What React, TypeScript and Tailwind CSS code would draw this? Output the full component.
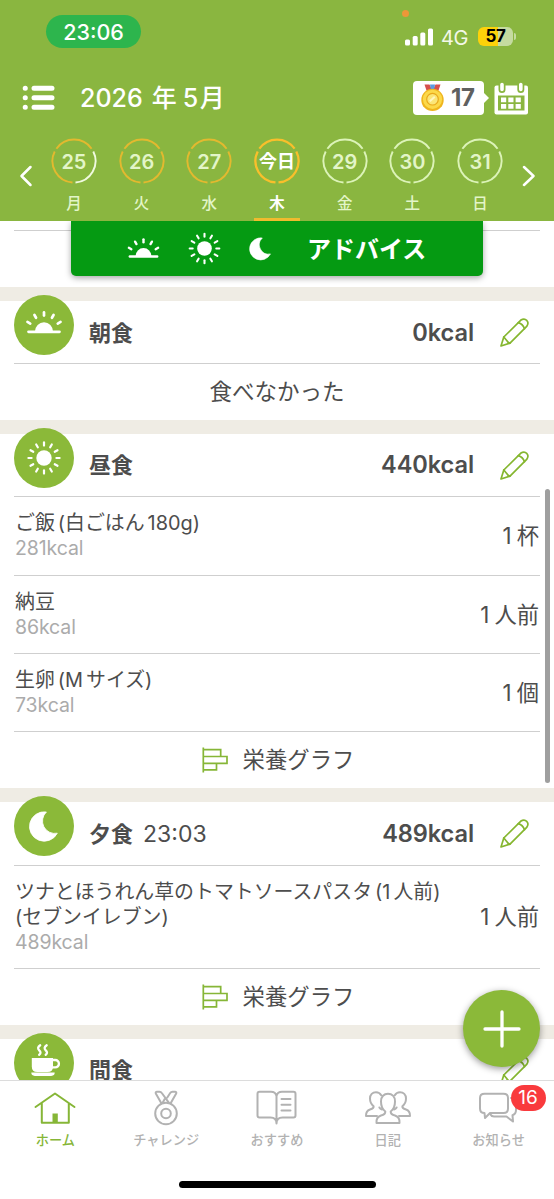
import type { ReactNode } from "react";

type Day = {
  label: string;
  weekday: string;
  arcs: [string, string, string];
  today?: boolean;
};

type Food = {
  name: ReactNode;
  kcal: string;
  amount: string;
};

const GOLD = "#e3b92f";
const PALE = "#dcf3b8";

const days: Day[] = [
  { label: "25", weekday: "月", arcs: [GOLD, "#f0fadf", GOLD] },
  { label: "26", weekday: "火", arcs: [GOLD, GOLD, GOLD] },
  { label: "27", weekday: "水", arcs: [GOLD, GOLD, GOLD] },
  { label: "今日", weekday: "木", arcs: ["#f9bf2b", "#f9bf2b", "#f9bf2b"], today: true },
  { label: "29", weekday: "金", arcs: [PALE, PALE, PALE] },
  { label: "30", weekday: "土", arcs: [PALE, PALE, PALE] },
  { label: "31", weekday: "日", arcs: [PALE, PALE, PALE] },
];

const lunch: Food[] = [
  {
    name: (
      <>
        ご飯<span className="ml-[3px]">(白ごはん</span>
        <span className="ml-[3px]">180g)</span>
      </>
    ),
    kcal: "281kcal",
    amount: "杯",
  },
  { name: "納豆", kcal: "86kcal", amount: "人前" },
  {
    name: (
      <>
        生卵<span className="ml-[3px]">(M</span>
        <span className="ml-[3px]">サイズ)</span>
      </>
    ),
    kcal: "73kcal",
    amount: "個",
  },
];

const dinner: Food[] = [
  {
    name: (
      <>
        ツナとほうれん草のトマトソースパスタ<span className="ml-[3px]">(1</span>
        <span className="ml-[3px]">人前)</span>
        <br />
        (セブンイレブン)
      </>
    ),
    kcal: "489kcal",
    amount: "人前",
  },
];

function Sunrise({ className }: { className?: string }) {
  return (
    <svg viewBox="0 0 60 60" className={className} stroke="#fff" strokeWidth="2.7" strokeLinecap="round">
      <path d="M14.5 36.8H45.5" />
      <path d="M21 36.5a9 9.3 0 0 1 18 0z" fill="#fff" stroke="none" />
      {[-60, -30, 0, 30, 60].map((a) => (
        <path key={a} d="M30 20.6V17.4" transform={`rotate(${a} 30 36.5)`} />
      ))}
    </svg>
  );
}

function Sun({ className }: { className?: string }) {
  return (
    <svg viewBox="0 0 60 60" className={className} stroke="#fff" strokeWidth="2.2" strokeLinecap="round">
      <circle cx="30" cy="30" r="7.7" fill="#fff" stroke="none" />
      {[...Array(12)].map((_, i) => (
        <path key={i} d="M30 17.6V14.4" transform={`rotate(${i * 30} 30 30)`} />
      ))}
    </svg>
  );
}

function Moon({ className }: { className?: string }) {
  return (
    <svg viewBox="0 0 60 60" className={className}>
      <path
        d="M32.4 16A14.7 14.7 0 1 0 43.3 37.2A12.4 12.4 0 0 1 32.4 16z"
        fill="#fff"
        stroke="#fff"
        strokeWidth="0.8"
        strokeLinejoin="round"
      />
    </svg>
  );
}

function Cup({ className }: { className?: string }) {
  return (
    <svg viewBox="0 0 60 60" className={className} fill="none" stroke="#fff" strokeLinecap="round">
      <path d="M17.8 25H39v8.500q0 5.500-5.500 5.500H23.300q-5.500 0-5.500-5.500z" fill="#fff" stroke="none" />
      <path d="M39 27h2.200a3.600 3.600 0 0 1 0 7.400H38.500" strokeWidth="2.4" />
      <path d="M17.300 39.600H40.700q0 3.300-3.500 3.300H20.800q-3.500 0-3.500-3.300z" fill="#fff" stroke="none" />
      <path d="M26.200 12.300q-3.600 2.500-1 5t0 4.400M32.700 12.300q-3.600 2.500-1 5t0 4.400" strokeWidth="2.3" />
    </svg>
  );
}

function Pencil() {
  return (
    <svg viewBox="0 0 29 29" className="h-[29px] w-[29px] shrink-0" fill="none" stroke="#85b62f" strokeWidth="1.7" strokeLinejoin="round" strokeLinecap="round">
      <path d="M1 28L3.800 19L20.600 2.300Q24.200 -0.200 26.700 2.300Q29.200 4.900 26.700 8.400L10 25.100Z" />
      <path d="M3.800 19L6.500 22.200Q7.500 24.600 10 25.100M18.300 4.600q4.500 1.300 6.200 6.100" />
    </svg>
  );
}

function GraphIcon() {
  return (
    <svg viewBox="0 0 26 26" className="h-[26px] w-[26px]" fill="none" stroke="#86b637" strokeWidth="1.7">
      <path d="M1.300 0.400V25.400M1.300 2.700H18.700V9.500M1.300 9.500H25V16.300H1.300M14.500 16.300V22.800H1.300" />
    </svg>
  );
}

function Chevron({ left }: { left?: boolean }) {
  return (
    <svg viewBox="0 0 14 22" className="h-[22px] w-3.5" fill="none" stroke="#fff" strokeWidth="2.5" strokeLinecap="round" strokeLinejoin="round">
      <path d={left ? "M11.500 2L2.500 11L11.500 20" : "M3 2L12.500 11L3 20"} />
    </svg>
  );
}

function DayCell({ day }: { day: Day }) {
  return (
    <div className="relative flex w-[67.7px] flex-col items-center">
      <div className="relative flex h-[46px] w-[46px] items-center justify-center">
        <svg viewBox="-23 -23 46 46" className="absolute inset-0" fill="none" strokeWidth={day.today ? 2.3 : 1.9}>
          {/* three arcs: top, right, left */}
          <path d="M-17.600 -12.300A21.500 21.500 0 0 1 17.600 -12.300" stroke={day.arcs[0]} />
          <path d="M19.300 -9.500A21.500 21.500 0 0 1 1.500 21.450" stroke={day.arcs[1]} />
          <path d="M-1.500 21.450A21.500 21.500 0 0 1 -19.300 -9.500" stroke={day.arcs[2]} />
        </svg>
        {day.today ? (
          <span className="mt-0.5 text-[18px] font-bold leading-none text-white">{day.label}</span>
        ) : (
          <span className="mt-0.5 text-[20px] font-semibold leading-none text-[#e3f5c8]">{day.label}</span>
        )}
      </div>
      <span className={day.today ? "mt-[10px] text-[15.5px] font-bold leading-5 text-white" : "mt-[10px] text-[15.5px] font-medium leading-5 text-[#e3f5c8]"}>
        {day.weekday}
      </span>
      {day.today && <div className="absolute top-[80px] h-[3px] w-[46px] bg-[#f0bb2e]" />}
    </div>
  );
}

function Header() {
  return (
    <header className="relative z-20 h-[221px] shrink-0 bg-[#8ab640] text-white">
      <div className="absolute left-[402px] top-[10px] h-[7px] w-[7px] rounded-full bg-[#ed9738]" />
      <div className="flex h-[65px] items-start justify-between pl-[46px] pr-[38px] pt-[15px]">
        <div className="flex h-[33px] w-[95px] items-center justify-center rounded-full bg-[#2db54d] pt-px text-[21.5px] font-medium">
          23:06
        </div>
        <div className="flex h-[43px] items-center">
          <svg viewBox="0 0 28 18" className="h-[18px] w-7" fill="#fff">
            <rect x="0" y="11.5" width="5" height="6" rx="1.5" />
            <rect x="7.7" y="8" width="5" height="9.5" rx="1.5" />
            <rect x="15.3" y="4.5" width="5" height="13" rx="1.5" />
            <rect x="23" y="0.5" width="5" height="17" rx="1.5" />
          </svg>
          <span className="ml-2 mt-[3px] w-[37px] text-[20px] tracking-[-0.4px] text-[#f3f8e8]">4G</span>
          <div className="flex h-[19px] w-[35px] items-center justify-center rounded-md bg-linear-to-r from-[#fdd20a] from-57% to-[#c5dba0] to-57% pt-px text-[17px] font-bold tracking-[-0.5px] text-black">
            57
          </div>
          <div className="ml-px h-[7px] w-0.5 rounded-r-full bg-[#c5dba0]" />
        </div>
      </div>
      <div className="flex h-[66px] items-center pl-[22px] pr-[26px]">
        <svg viewBox="0 0 33 26" className="h-[26px] w-[33px]" stroke="#fff" strokeWidth="5" strokeLinecap="round">
          <path d="M3.200 3.300h0.100M3.200 12.800h0.100M3.200 22.300h0.100M12 3.300h18M12 12.800h18M12 22.300h18" />
        </svg>
        <h1 className="ml-[25px] flex text-[25px] font-medium leading-8">
          <span>2026</span>
          <span className="ml-[9px]">年</span>
          <span className="ml-[6px]">5</span>
          <span className="ml-[1.5px]">月</span>
        </h1>
        <div className="relative ml-auto flex h-[34px] w-[71px] items-center rounded bg-white pl-2 text-[#5f6060]">
          <svg viewBox="0 0 23 28" className="h-7 w-[23px]">
            <path d="M3.500 0.500h5l3 6h-6z" fill="#d6504c" />
            <path d="M19.500 0.500h-5l-3 6h6z" fill="#d6504c" />
            <path d="M9 0.500h5l-1 6h-3z" fill="#5a9be0" />
            <circle cx="11.5" cy="15.9" r="11.2" fill="#efb51e" />
            <circle cx="11.5" cy="15.3" r="9.6" fill="#fcd94a" />
            <circle cx="11.500" cy="15.2" r="5.8" fill="#fbe678" stroke="#e9a91c" strokeWidth="1.200" />
            <path d="M8.800 17.200l5-4.500" stroke="#fff6c0" strokeWidth="2" />
          </svg>
          <span className="ml-[7px] text-[24px] font-bold leading-none tracking-[-0.3px]">17</span>
          <div className="absolute -right-[5px] h-0 w-0 border-y-[6px] border-l-[6px] border-y-transparent border-l-white" />
        </div>
        <svg viewBox="0 0 34 33" className="ml-[10px] h-[33px] w-[34px]" fill="none">
          <path d="M0.500 5.500q0-2 2-2H32q2 0 2 2V30.500q0 2-2 2H2.500q-2 0-2-2z" fill="#fff" />
          <path d="M4 13.500H30.500V28.500H4z" fill="#8ab640" />
          {[7, 14.3, 21.6].map((x) => (
            <path key={x} d={`M${x} 15.500h5.200v4.800h-5.200zM${x} 22h5.200v4.800h-5.200z`} fill="#fff" />
          ))}
          <path d="M8 2.500v5M26.800 2.500v5" stroke="#8ab640" strokeWidth="7" strokeLinecap="round" />
          <path d="M8 2.500v5M26.800 2.500v5" stroke="#fff" strokeWidth="3.6" strokeLinecap="round" />
        </svg>
      </div>
      <div className="flex h-[90px] items-start justify-between px-[19px] pt-[7px]">
        <div className="pt-[27px]">
          <Chevron left />
        </div>
        <div className="flex">
          {days.map((day) => (
            <DayCell key={day.label} day={day} />
          ))}
        </div>
        <div className="pt-[27px]">
          <Chevron />
        </div>
      </div>
    </header>
  );
}

function MealHeader({ icon, title, time, kcal }: { icon: ReactNode; title: string; time?: string; kcal?: string }) {
  return (
    <div className="mx-3.5 flex h-[63.4px] items-start border-b border-[#cfcfcf]">
      <div className="relative -mt-1.5 h-[60px] w-[60px] shrink-0 rounded-full bg-[#8bb939]">{icon}</div>
      <div className="ml-[15px] flex h-[63px] flex-1 items-center text-[22px] leading-8">
        <span className="font-bold">{title}</span>
        {time && <span className="ml-[10px] text-[23px]">{time}</span>}
        <span className="ml-auto mr-[26px] text-[23.6px] font-semibold tracking-[-0.1px]">{kcal}</span>
        <div className="mr-[11px]">
          <Pencil />
        </div>
      </div>
    </div>
  );
}

function FoodRow({ food }: { food: Food }) {
  return (
    <div className="mx-3.5 flex items-center justify-between border-b border-[#cfcfcf] pb-[13.3px] pl-px pr-px pt-[14px]">
      <div>
        <div className="text-[19.9px] leading-[25px]">{food.name}</div>
        <div className="text-[19.5px] leading-[25px] tracking-[-0.1px] text-[#ababab]">{food.kcal}</div>
      </div>
      <div className="text-[22.3px] leading-8">
        1<span className="ml-[5px]">{food.amount}</span>
      </div>
    </div>
  );
}

function GraphLink() {
  return (
    <div className="flex h-[56px] items-center justify-center gap-[15px] pl-[2px] text-[22.4px] leading-8">
      <GraphIcon />
      栄養グラフ
    </div>
  );
}

function NavItem({ label, active, children }: { label: string; active?: boolean; children: ReactNode }) {
  return (
    <div className={active ? "flex flex-1 flex-col items-center text-[#86b637]" : "flex flex-1 flex-col items-center text-[#b2b2b2]"}>
      <div className="mt-[9px] h-9">{children}</div>
      <span className="mt-1 text-[13.2px] font-medium leading-5">{label}</span>
    </div>
  );
}

function BottomNav() {
  const icon = { fill: "none", stroke: "currentColor", strokeWidth: 2, strokeLinejoin: "round" as const, strokeLinecap: "round" as const };

  return (
    <nav className="relative z-20 flex h-[119px] shrink-0 border-t border-[#dcdcdc] bg-white">
      <NavItem label="ホーム" active>
        <svg {...icon} viewBox="0 0 42 36" className="h-9 w-[42px]">
          <path d="M1.500 17L21 3.500L40.500 17M7.800 13.500V32.700H34.800V13.500" />
          <path d="M18.500 23.500h5.300v9h-5.300z" fill="currentColor" stroke="none" />
        </svg>
      </NavItem>
      <NavItem label="チャレンジ">
        <svg {...icon} viewBox="0 0 24 36" className="h-9 w-6">
          <circle cx="12" cy="23.5" r="10.8" />
          <circle cx="12" cy="23.5" r="4.8" />
          <path d="M7.500 13.500L1.800 3.500Q1.200 1.800 3 1.800H5.500Q7 1.800 7.800 3L14.800 12.700M16.500 13.500L22.200 3.500Q22.800 1.800 21 1.800H18.500Q17 1.800 16.200 3L13.300 7.500M10.700 9L8.800 12.500" />
        </svg>
      </NavItem>
      <NavItem label="おすすめ">
        <svg {...icon} viewBox="0 0 41 36" className="h-9 w-[41px]">
          <path d="M20.500 6Q19.500 1.800 15 1.800H3.500Q1.500 1.800 1.500 3.800V25.500Q1.500 27.500 3.500 27.500H14.500Q20.500 27.500 20.500 33.500Q20.500 27.500 26.500 27.500H37.500Q39.500 27.500 39.500 25.500V3.800Q39.500 1.800 37.500 1.800H26Q21.500 1.800 20.500 6V32" />
          <path d="M25.500 9H34.500M25.500 14.700H34.500M25.500 20.500H34.500" />
        </svg>
      </NavItem>
      <NavItem label="日記">
        <svg {...icon} viewBox="0 0 48 36" className="h-9 w-12">
          <path d="M12.500 33Q12 27 17 25.500Q21.500 24.500 21.300 21.500C18.500 19.500 17 15.500 17 11.500C17 6.500 20 3.800 24 3.800C28 3.800 31 6.500 31 11.500C31 15.500 29.500 19.500 26.700 21.500Q26.500 24.500 31 25.500Q36 27 35.500 33Z" />
          <path d="M13 26H2Q1.800 20.800 6 19.500Q10 18.500 9.600 16.200C7.500 14.500 6 11.500 6 8.500C6 4.500 8.500 2.300 12 2.300Q15.500 2.300 17.200 5.300M15.400 17.500Q16.200 19 18 19.500" />
          <path d="M35 26H46Q46.200 20.800 42 19.500Q38 18.500 38.400 16.200C40.500 14.500 42 11.500 42 8.500C42 4.500 39.500 2.300 36 2.300Q32.500 2.300 30.800 5.300M32.600 17.500Q31.800 19 30 19.500" />
        </svg>
      </NavItem>
      <NavItem label="お知らせ">
        <div className="relative mr-[2px]">
          <svg {...icon} viewBox="0 0 40 36" className="h-9 w-10">
            <path d="M6.500 23Q2 23 2 18.500V8Q2 3.700 6.500 3.700H25.500Q30 3.700 30 8V18.500Q30 23 25.500 23H12L7 28L6.500 23Z" />
            <path d="M33 8Q38 9 38 13V20Q38 24 34.500 25.200L35 31.500L28.500 26.500H16Q13.500 26.500 12.500 24.500" />
          </svg>
          <div className="absolute -top-[5px] left-[33px] flex h-[26px] w-[35px] items-center justify-center rounded-full bg-[#f93a3d] pt-px text-[19px] text-white">
            16
          </div>
        </div>
      </NavItem>
      <div className="absolute bottom-[11px] left-[179px] h-[7px] w-[197px] rounded-full bg-black" />
    </nav>
  );
}

export default function App() {
  return (
    <div className="relative flex h-[1199px] w-[554px] flex-col overflow-hidden bg-white font-['Inter','Noto_Sans_CJK_JP',sans-serif] text-[#4d4d4d]">
      <Header />

      <main className="relative min-h-0 flex-1 overflow-hidden bg-[#efece4]">
        <div className="h-[66px] bg-white px-3.5 pt-[9px]">
          <div className="border-t border-[#cfcfcf]" />
        </div>
        <button className="absolute left-[71px] top-0 z-10 flex h-[55px] w-[412px] items-center rounded-b-[5px] bg-[#059a12] pl-[46px] text-[24px] font-bold text-white shadow-[0_2px_6px_rgba(0,0,0,0.35)]">
          <Sunrise className="mt-[4px] h-[53px] w-[53px]" />
          <Sun className="ml-[6px] h-[57px] w-[57px]" />
          <Moon className="ml-[5px] h-[45px] w-[45px]" />
          <span className="ml-6 mt-0.5 leading-8">アドバイス</span>
        </button>

        <section className="mt-3.5 bg-white">
          <MealHeader icon={<Sunrise />} title="朝食" kcal="0kcal" />
          <div className="flex h-[55.6px] items-center justify-center text-[22.5px] leading-8">食べなかった</div>
        </section>

        <section className="mt-3.5 bg-white">
          <MealHeader icon={<Sun />} title="昼食" kcal="440kcal" />
          {lunch.map((food) => (
            <FoodRow key={food.kcal} food={food} />
          ))}
          <GraphLink />
        </section>

        <section className="mt-3.5 bg-white">
          <MealHeader icon={<Moon />} title="夕食" time="23:03" kcal="489kcal" />
          {dinner.map((food) => (
            <FoodRow key={food.kcal} food={food} />
          ))}
          <GraphLink />
        </section>

        <section className="mt-3.5 bg-white">
          <MealHeader icon={<Cup />} title="間食" />
        </section>

        <div className="absolute right-1 top-[268px] h-[294px] w-[5px] rounded-full bg-[#9f9f9f]" />
      </main>

      <button className="absolute left-[463px] top-[990px] z-10 flex h-[77px] w-[77px] items-center justify-center rounded-full bg-[#8bb939] shadow-[0_2px_7px_rgba(0,0,0,0.4)]">
        <svg viewBox="0 0 38 38" className="h-[38px] w-[38px]" stroke="#fff" strokeWidth="3.3" strokeLinecap="round">
          <path d="M19 2V36M2 19H36" />
        </svg>
      </button>

      <BottomNav />
    </div>
  );
}
